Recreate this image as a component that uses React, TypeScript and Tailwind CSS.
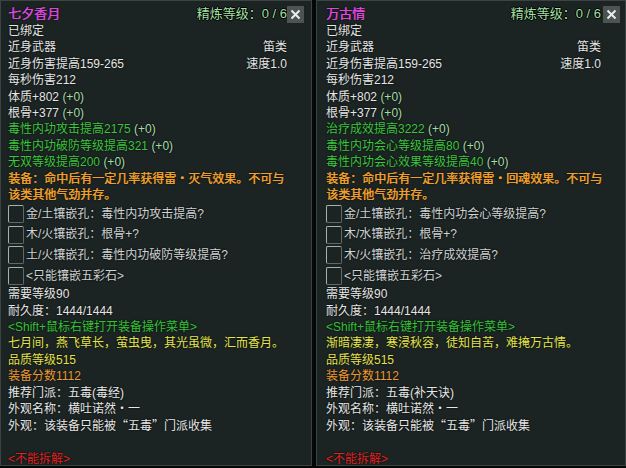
import React from 'react'

type Line = { text: React.ReactNode; cls?: string }

interface Item {
  name: string
  stats: [string, string][]
  effect: string
  sockets: string[]
  poem: string
  school: string
}

const items: Item[] = [
  {
    name: '七夕香月',
    stats: [
      ['毒性内功攻击提高2175', '(+0)'],
      ['毒性内功破防等级提高321', '(+0)'],
      ['无双等级提高200', '(+0)'],
    ],
    effect: '灭气',
    sockets: ['金/土镶嵌孔：毒性内功攻击提高?', '木/火镶嵌孔：根骨+?', '土/火镶嵌孔：毒性内功破防等级提高?'],
    poem: '七月间，燕飞草长，萤虫曳，其光虽微，汇而香月。',
    school: '五毒(毒经)',
  },
  {
    name: '万古情',
    stats: [
      ['治疗成效提高3222', '(+0)'],
      ['毒性内功会心等级提高80', '(+0)'],
      ['毒性内功会心效果等级提高40', '(+0)'],
    ],
    effect: '回魂',
    sockets: ['金/土镶嵌孔：毒性内功会心等级提高?', '木/水镶嵌孔：根骨+?', '木/火镶嵌孔：治疗成效提高?'],
    poem: '渐暗凄凄，寒浸秋容，徒知自苦，难掩万古情。',
    school: '五毒(补天诀)',
  },
]

// small socket frame
function Socket() {
  return (
    <div className="w-[16px] h-[18px] mr-[2px] border border-[#a8b0ae] border-r-[#5f6867] border-b-[#5f6867] rounded-[2px] shrink-0" />
  )
}

function Tooltip({ item, pl, width }: { item: Item; pl: string; width: string }) {
  const plus = 'text-[#a6dca6]'
  const orange = 'text-[#f0a02c] [text-shadow:0.5px_0_0_#f0a02c,0_0_2px_#000]'
  const head: Line[] = [
    { text: '已绑定' },
    { text: <div className="flex justify-between"><span>近身武器</span><span>笛类</span></div> },
    { text: <div className="flex justify-between"><span>近身伤害提高159-265</span><span>速度1.0</span></div> },
    { text: '每秒伤害212' },
    { text: <>体质+802 <span className={plus}>(+0)</span></> },
    { text: <>根骨+377 <span className={plus}>(+0)</span></> },
    ...item.stats.map(([s, p]) => ({
      text: <>{s} <span className={plus}>{p}</span></>,
      cls: 'text-[#3ec43e]',
    })),
    { text: `装备：命中后有一定几率获得雷・${item.effect}效果。不可与`, cls: orange },
    { text: '该类其他气劲并存。', cls: orange },
  ]
  const tail: Line[] = [
    { text: '需要等级90' },
    { text: '耐久度：1444/1444' },
    { text: '<Shift+鼠标右键打开装备操作菜单>', cls: 'text-[#36c236]' },
    { text: item.poem, cls: 'text-[#e4e44c]' },
    { text: '品质等级515', cls: 'text-[#e4e04c]' },
    { text: '装备分数1112', cls: 'text-[#ec9a34]' },
    { text: `推荐门派：${item.school}` },
    { text: '外观名称：横吐诺然・一' },
    { text: <>外观：该装备只能被<span className="font-['Noto_Sans_CJK_SC']">“五毒”</span>门派收集</> },
    { text: '\u00a0' },
    { text: '<不能拆解>', cls: 'text-[#e02424]' },
  ]

  return (
    <div className={`relative h-[466px] ${width} bg-[#1b2423] border border-[#3b4443] ${pl} pr-[24px] pt-[4px] text-[12px] leading-[16.4px] text-[#e6e6e6] whitespace-nowrap font-['Liberation_Sans','Noto_Sans_CJK_SC',sans-serif] [text-shadow:0_0_2px_#000]`}>
      <div className="flex justify-between items-center h-[18px]">
        <span className="text-[13px] text-[#dc48dc] [text-shadow:0.4px_0_0_#dc48dc,0_0_2px_#000]">{item.name}</span>
        <span className="text-[13px] text-[#a4e0a4] [text-shadow:1px_0_0_#000,-1px_0_0_#000,0_1px_0_#000,0_-1px_0_#000]">精炼等级：0 / 6</span>
      </div>
      <button className="absolute left-[286px] top-[5px] w-[17px] h-[17px] bg-[#4c5453] flex items-center justify-center">
        <svg width="11" height="11" viewBox="0 0 11 11">
          <path d="M1.5 1.5 L9.5 9.5 M9.5 1.5 L1.5 9.5" stroke="#e8ecec" strokeWidth="2" />
        </svg>
      </button>
      {head.map((l, i) => (
        <div key={i} className={l.cls}>{l.text}</div>
      ))}
      {[...item.sockets, '<只能镶嵌五彩石>'].map((s, i) => (
        <div key={i} className="flex items-center h-[20.7px] text-[#cfd2d2]">
          <Socket />
          <span>{s}</span>
        </div>
      ))}
      {tail.map((l, i) => (
        <div key={i} className={l.cls}>{l.text}</div>
      ))}
    </div>
  )
}

export default function App() {
  return (
    <div className="w-[626px] h-[468px] bg-[#050707] flex gap-[4px] overflow-hidden">
      <Tooltip item={items[0]} pl="pl-[7px]" width="w-[312px]" />
      <Tooltip item={items[1]} pl="pl-[9px]" width="w-[310px]" />
    </div>
  )
}
